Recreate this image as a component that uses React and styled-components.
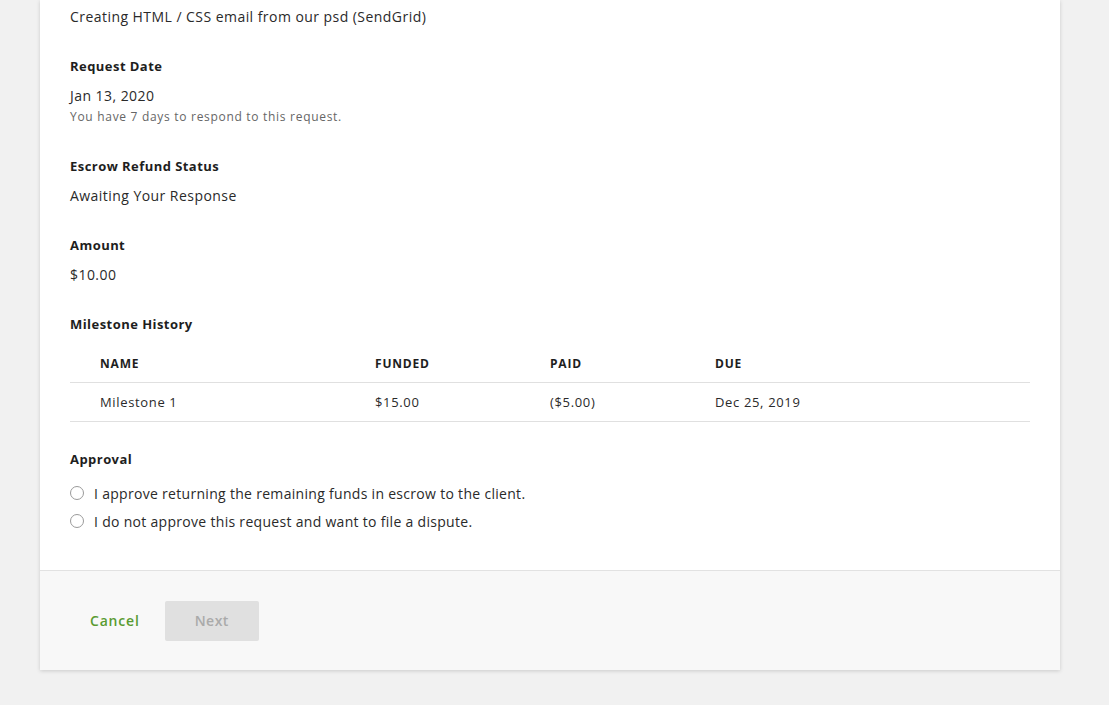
import React from 'react';
import styled, { createGlobalStyle } from 'styled-components';

const GlobalStyle = createGlobalStyle`
  html, body {
    margin: 0;
    padding: 0;
    background: #f1f1f1;
    font-family: "Open Sans", "Liberation Sans", sans-serif;
    color: #222;
  }
`;

const Page = styled.div`
  padding: 0 49px 34px 40px;
`;

const Card = styled.div`
  width: 1020px;
  background: #fff;
  box-shadow: 0 1px 4px rgba(0, 0, 0, 0.16);
`;

const Body = styled.div`
  padding: 7px 30px 35px 30px;
`;

const Section = styled.div`
  margin-bottom: ${(p) => p.$gap || '29px'};
`;

const Label = styled.div`
  font-size: 13px;
  font-weight: 700;
  line-height: 20px;
  letter-spacing: 0.45px;
  color: #1e1e1e;
  margin-bottom: ${(p) => (p.$tight ? '0' : '10px')};
`;

const Value = styled.div`
  font-size: 14px;
  line-height: 20px;
  letter-spacing: 0.45px;
  color: #2a2a2a;
`;

const Hint = styled.div`
  font-size: 12px;
  line-height: 20px;
  letter-spacing: 0.7px;
  color: #666;
  margin-top: 1px;
`;

const Table = styled.table`
  width: 100%;
  border-collapse: collapse;
  margin-top: 10px;
`;

const Th = styled.th`
  text-align: left;
  font-size: 12px;
  font-weight: 700;
  letter-spacing: 0.8px;
  color: #1e1e1e;
  height: 38px;
  padding: 0 0 0 30px;
  width: ${(p) => p.$w || 'auto'};
  border-bottom: 1px solid #e0e0e0;
`;

const Td = styled.td`
  font-size: 13px;
  letter-spacing: 0.65px;
  color: #2a2a2a;
  height: 37px;
  padding: 0 0 1px 30px;
  border-bottom: 1px solid #e0e0e0;
`;

const Options = styled.div`
  display: flex;
  flex-direction: column;
  margin-top: 10px;
`;

const Option = styled.label`
  display: flex;
  align-items: center;
  gap: 10px;
  height: 28px;
  font-size: 14px;
  letter-spacing: 0.3px;
  color: #2a2a2a;
  cursor: pointer;
`;

const Radio = styled.span`
  width: 12px;
  height: 12px;
  border: 1px solid #9a9a9a;
  border-radius: 50%;
  background: #fff;
  flex: none;
`;

const Footer = styled.div`
  display: flex;
  align-items: center;
  gap: 5px;
  height: 99px;
  padding: 0 30px;
  background: #f8f8f8;
  border-top: 1px solid #e2e2e2;
`;

const Button = styled.button`
  font-family: inherit;
  font-size: 14px;
  font-weight: 600;
  letter-spacing: ${(p) => (p.$primary ? '0.5px' : '0.8px')};
  height: 40px;
  padding: 0 ${(p) => (p.$primary ? '30px' : '20px')};
  border: none;
  border-radius: 2px;
  background: ${(p) => (p.$primary ? '#e0e0e0' : 'transparent')};
  color: ${(p) => (p.$primary ? '#aaa' : '#5a9b32')};
  cursor: pointer;
`;

const milestones = [
  { name: 'Milestone 1', funded: '$15.00', paid: '($5.00)', due: 'Dec 25, 2019' },
];

export default function App() {
  return (
    <>
      <GlobalStyle />
      <Page>
        <Card>
          <Body>
            <Section>
              <Value>Creating HTML / CSS email from our psd (SendGrid)</Value>
            </Section>
            <Section>
              <Label>Request Date</Label>
              <Value>Jan 13, 2020</Value>
              <Hint>You have 7 days to respond to this request.</Hint>
            </Section>
            <Section>
              <Label>Escrow Refund Status</Label>
              <Value>Awaiting Your Response</Value>
            </Section>
            <Section>
              <Label>Amount</Label>
              <Value>$10.00</Value>
            </Section>
            <Section $gap="27px">
              <Label $tight>Milestone History</Label>
              <Table>
                <thead>
                  <tr>
                    <Th $w="245px">NAME</Th>
                    <Th $w="145px">FUNDED</Th>
                    <Th $w="135px">PAID</Th>
                    <Th>DUE</Th>
                  </tr>
                </thead>
                <tbody>
                  {milestones.map((m) => (
                    <tr key={m.name}>
                      <Td>{m.name}</Td>
                      <Td>{m.funded}</Td>
                      <Td>{m.paid}</Td>
                      <Td>{m.due}</Td>
                    </tr>
                  ))}
                </tbody>
              </Table>
            </Section>
            <div>
              <Label $tight>Approval</Label>
              <Options>
                <Option>
                  <Radio />
                  I approve returning the remaining funds in escrow to the client.
                </Option>
                <Option>
                  <Radio />
                  I do not approve this request and want to file a dispute.
                </Option>
              </Options>
            </div>
          </Body>
          <Footer>
            <Button>Cancel</Button>
            <Button $primary>Next</Button>
          </Footer>
        </Card>
      </Page>
    </>
  );
}
